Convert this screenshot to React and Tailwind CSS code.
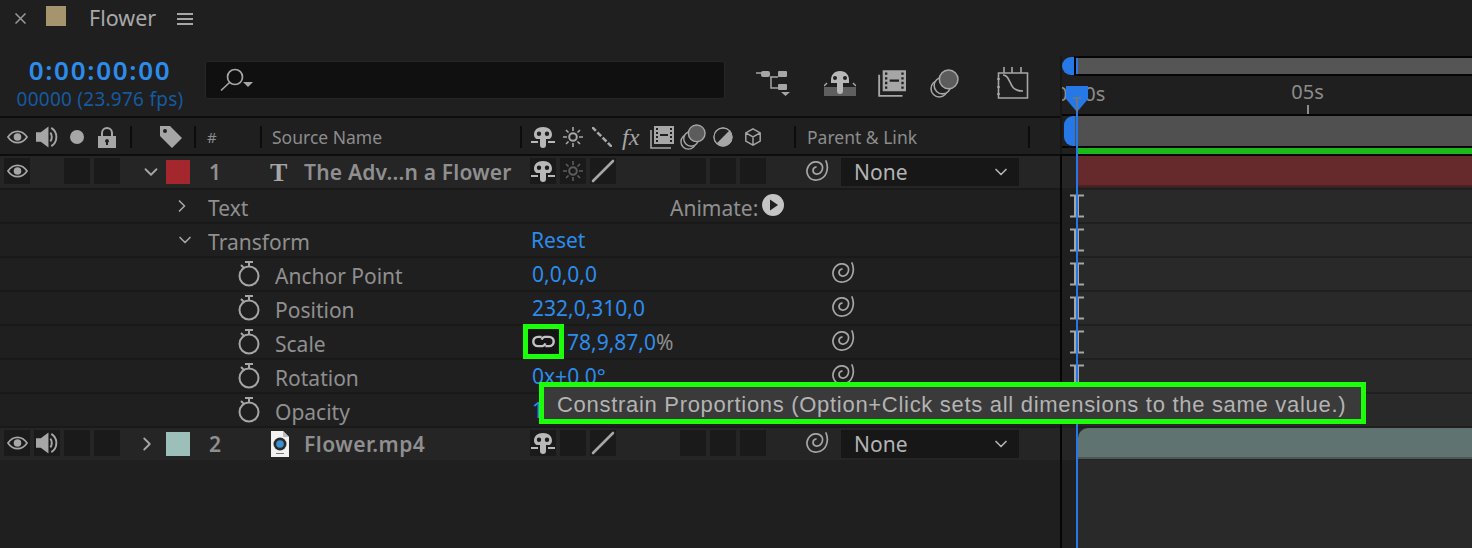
import React from "react";
import { ChevronDown, ChevronRight } from "lucide-react";

const GREY = "#a6a6a6";

function Eye({ className }) {
  return (
    <svg viewBox="0 0 22 14" className={className}>
      <path d="M1 7C4 2.500 7.500 1 11 1s7 1.500 10 6c-3 4.500-6.500 6-10 6S4 11.500 1 7z" fill="none" stroke={GREY} strokeWidth="1.800" />
      <circle cx="11" cy="7" r="4" fill={GREY} />
    </svg>
  );
}

function Speaker({ className }) {
  return (
    <svg viewBox="0 0 24 22" className={className}>
      <path d="M0 6h5l8-6v22l-8-6H0z" fill={GREY} />
      <path d="M15 6.500c2 2.500 2 6.500 0 9" fill="none" stroke={GREY} strokeWidth="2" />
      <path d="M16 1.500c7 4.500 7 14.500 0 19" fill="none" stroke={GREY} strokeWidth="2" />
    </svg>
  );
}

function Lock({ className }) {
  return (
    <svg viewBox="0 0 18 21" className={className}>
      <path d="M4 9V6a5 5 0 0 1 10 0v3" fill="none" stroke={GREY} strokeWidth="2" />
      <path fillRule="evenodd" d="M0 9h18v12H0zM9 12a2 2 0 0 0-1 3.700V18h2v-2.300A2 2 0 0 0 9 12z" fill={GREY} />
    </svg>
  );
}

function Tag({ className }) {
  return (
    <svg viewBox="0 0 24 24" className={className}>
      <path fillRule="evenodd" d="M1 1h10l12 12-10 10L1 11zM6 4a2 2 0 1 0 0 4 2 2 0 0 0 0-4z" fill={GREY} />
    </svg>
  );
}

function Shy({ className }) {
  return (
    <svg viewBox="0 0 24 22" className={className}>
      <path fillRule="evenodd" d="M12 1c5.500 0 9 3 9 7.500 0 2-1 3.500-2.500 4.500H15v6a3 3 0 0 1-6 0v-6H5.500C4 12 3 10.500 3 8.500 3 4 6.500 1 12 1zM8 5.500a2.200 2.200 0 1 0 0 4.400 2.200 2.200 0 0 0 0-4.400zM16 5.500a2.200 2.200 0 1 0 0 4.400 2.200 2.200 0 0 0 0-4.400z" fill="#b8b8b8" />
      <path d="M0 16h7M17 16h7" stroke="#b8b8b8" strokeWidth="1.800" />
    </svg>
  );
}

function ShyBig({ className }) {
  return (
    <svg viewBox="0 0 32 26" className={className}>
      <path d="M0 17h32v9H0z" fill="#5f5f5f" />
      <path d="M0 16l3-3M29 13l3 3" stroke="#a6a6a6" strokeWidth="1.500" />
      <path fillRule="evenodd" d="M16 1c6 0 9 4 9 9v3h-6v8a3 3 0 0 1-6 0v-8H7v-3c0-5 3-9 9-9zM11 6a2 2 0 1 0 0 4 2 2 0 0 0 0-4zM21 6a2 2 0 1 0 0 4 2 2 0 0 0 0-4z" fill="#b8b8b8" />
    </svg>
  );
}

function Sun({ className, color = GREY }) {
  return (
    <svg viewBox="0 0 20 20" className={className} stroke={color} strokeWidth="1.600" fill="none">
      <circle cx="10" cy="10" r="3.800" strokeWidth="2" />
      <path d="M10 0v4M10 16v4M0 10h4M16 10h4M3 3l2.500 2.500M14.500 14.500L17 17M17 3l-2.500 2.500M5.500 14.500L3 17" />
    </svg>
  );
}

function Dashes({ className }) {
  return (
    <svg viewBox="0 0 20 20" className={className}>
      <path d="M0 0l20 20" stroke={GREY} strokeWidth="2.600" strokeDasharray="5.500 2" />
    </svg>
  );
}

function Slash({ className }) {
  return (
    <svg viewBox="0 0 24 24" className={className}>
      <path d="M2 22L22 2" stroke={GREY} strokeWidth="2.600" strokeLinecap="round" />
    </svg>
  );
}

function Film({ className }) {
  return (
    <svg viewBox="0 0 24 24" className={className}>
      <path d="M1 5v18h20" fill="none" stroke={GREY} strokeWidth="1.600" />
      <path fillRule="evenodd" d="M4 1h20v18H4zM6 3v2h2V3zM6 7v2h2V7zM6 11v2h2v-2zM6 15v2h2v-2zM20 3v2h2V3zM20 7v2h2V7zM20 11v2h2v-2zM20 15v2h2v-2zM10 9v2h8V9z" fill={GREY} />
    </svg>
  );
}

function Circles({ className }) {
  return (
    <svg viewBox="0 0 28 28" className={className} fill="none" stroke={GREY} strokeWidth="1.500">
      <circle cx="9" cy="19" r="8" />
      <circle cx="12" cy="16" r="8" fill="#1f1f1f" />
      <circle cx="18" cy="10" r="9" fill="#5c5c5c" />
    </svg>
  );
}

function HalfCircle({ className }) {
  return (
    <svg viewBox="0 0 20 20" className={className}>
      <circle cx="10" cy="10" r="9.500" fill={GREY} />
      <path d="M16.700 3.300A9.500 9.500 0 0 0 3.300 16.700z" fill="#1f1f1f" />
      <circle cx="10" cy="10" r="9" fill="none" stroke={GREY} strokeWidth="1.300" />
    </svg>
  );
}

function Cube({ className }) {
  return (
    <svg viewBox="0 0 20 20" className={className} fill="none" stroke={GREY} strokeWidth="1.600">
      <path d="M10 1l8 4.500v9L10 19l-8-4.500v-9zM2 5.500l8 4.500 8-4.500M10 10v9" />
    </svg>
  );
}

function Spiral({ className }) {
  return (
    <svg viewBox="0 0 24 24" className={className} fill="none" stroke={GREY} strokeWidth="1.700" strokeLinecap="round">
      <path d="M21 2C24 9 22 20 12 21 4 22 0 14 3 8 6 2 14 1 17 6 19 11 15 16 11 15 7 14 7 9 11 8" />
    </svg>
  );
}

function Stopwatch({ className }) {
  return (
    <svg viewBox="0 0 22 26" className={className} fill="none" stroke={GREY} strokeWidth="2">
      <circle cx="11" cy="15" r="9.500" />
      <path d="M7 1h8M11 1v4M3 4l3 3" />
    </svg>
  );
}

function Link({ className }) {
  return (
    <svg viewBox="0 0 26 14" className={className} fill="none" stroke="#c2c2c2" strokeWidth="2.600">
      <path d="M11 2H7a5 5 0 0 0 0 10h5a4 4 0 0 0 3-3" />
      <path d="M15 12h4a5 5 0 0 0 0-10h-5a4 4 0 0 0-3 3" />
    </svg>
  );
}

function FileIcon({ className }) {
  return (
    <svg viewBox="0 0 20 26" className={className}>
      <path d="M1 0h12l6 6v20H1z" fill="#f2f2f2" />
      <path d="M13 0v6h6" fill="#bdbdbd" />
      <circle cx="10" cy="13" r="6.500" fill="#2a2a2a" />
      <circle cx="10" cy="13" r="3.800" fill="#3c8fd0" />
      <path d="M6 22.500h8" stroke="#777" strokeWidth="1" />
    </svg>
  );
}

function Search({ className }) {
  return (
    <svg viewBox="0 0 34 24" className={className} fill="none">
      <circle cx="15" cy="9" r="7.500" stroke={GREY} strokeWidth="1.700" />
      <path d="M9.500 14.500L1 22.500" stroke={GREY} strokeWidth="1.700" />
      <path d="M23 14h10l-5 5z" fill={GREY} />
    </svg>
  );
}

function FlowIcon({ className }) {
  return (
    <svg viewBox="0 0 34 26" className={className}>
      <path d="M0 3h6M14 7h8M15 7v11h8" stroke={GREY} strokeWidth="1.500" fill="none" />
      <rect x="5" y="1" width="9" height="6" rx="2" fill={GREY} />
      <rect x="22" y="1" width="9" height="6" rx="1" fill={GREY} />
      <rect x="22" y="14" width="9" height="6" rx="1" fill={GREY} />
      <path d="M25 22h9l-4.500 4z" fill={GREY} />
    </svg>
  );
}

function GraphIcon({ className }) {
  return (
    <svg viewBox="0 0 32 32" className={className} fill="none" stroke={GREY} strokeWidth="1.600">
      <path d="M1.500 6h29v25h-29z" />
      <path d="M7 0v6M15 0v6M24 0v6M0 12h3M0 20h3M0 27h3" />
      <path d="M6 8c5 0 6 6 9 11 2 4 5 5 11 5" />
    </svg>
  );
}

function Divider() {
  return <div className="w-[2px] h-[22px] bg-[#0c0c0c] shrink-0" />;
}

function Slot({ children, className = "" }) {
  return <div className={`w-[26px] h-[26px] -mt-[2px] bg-[#1a1a1a] flex items-center justify-center shrink-0 ${className}`}>{children}</div>;
}

function NoneSelect() {
  return (
    <div className="w-[178px] h-[28px] bg-[#171717] flex items-center justify-between pl-[13px] pr-[8px] ml-[12px] text-[21px] text-[#b3b3b3]">
      <span className="mt-[2px]">None</span>
      <ChevronDown size={20} color="#b3b3b3" strokeWidth={2} />
    </div>
  );
}

function Prop({ name, children, spiral = true }) {
  return (
    <div className="h-[32px] box-content border-b-2 border-[#191919] flex items-center">
      <div className="w-[238px] shrink-0" />
      <Stopwatch className="w-[22px] h-[26px] shrink-0" />
      <div className="w-[257px] ml-[15px] mt-[6px] text-[21px] text-[#8f8f8f] shrink-0">{name}</div>
      <div className="w-[299px] mt-[2px] shrink-0 text-[21px] text-[#2d8ceb]">{children}</div>
      {spiral && <Spiral className="w-[24px] h-[24px] -mt-[2px]" />}
    </div>
  );
}

function LaneRow({ keyframe }) {
  return (
    <div className="h-[32px] box-content border-b-2 border-[#1f1f1f] bg-[linear-gradient(to_right,#1f1f1f_15px,#292929_15px)] pl-[8px] flex items-center">
      {keyframe && (
        <svg viewBox="0 0 14 24" className="w-[14px] h-[24px]">
          <path d="M0 1.500h14M0 22.500h14" stroke="#a6a6a6" strokeWidth="2" fill="none" />
          <path d="M4 1.500h5v21H4z" fill="#a6a6a6" />
        </svg>
      )}
    </div>
  );
}

export default function App() {
  return (
    <div className="relative w-[1472px] h-[548px] overflow-hidden flex bg-[#1f1f1f] font-['Noto_Sans',sans-serif]">
      <div className="w-[1060px] shrink-0 flex flex-col">
        {/* tab */}
        <div className="h-[52px] flex items-start pt-[6px]">
          <div className="ml-[15px] mt-[7px] w-[11px] h-[11px]">
            <svg viewBox="0 0 11 11" className="w-[11px] h-[11px]"><path d="M.5.500l10 10M10.500.500l-10 10" stroke="#9a9a9a" strokeWidth="1.500" /></svg>
          </div>
          <div className="ml-[20px] w-[20px] h-[20px] bg-[#a6946f]" />
          <div className="ml-[23px] -mt-[3px] text-[21.500px] leading-[30px] text-[#a8a8a8]">Flower</div>
          <div className="ml-[21px] mt-[7px] w-[16px] h-[12px] border-y-2 border-[#a6a6a6] flex items-center"><div className="w-full h-[2px] bg-[#a6a6a6]" /></div>
        </div>
        {/* time and toolbar */}
        <div className="h-[64px] box-content flex items-start border-b-2 border-[#0d0d0d]">
          <div className="w-[205px] shrink-0 pl-[17px] pr-[22px] flex flex-col items-center">
            <div className="text-[26px] leading-[36px] font-semibold text-[#2d8ceb] tracking-[1.700px] whitespace-nowrap">0:00:00:00</div>
            <div className="text-[19px] leading-[26px] -mt-[2px] text-[#155a9f] tracking-[0.250px] whitespace-nowrap">00000 (23.976 fps)</div>
          </div>
          <div className="mt-[9px] w-[520px] h-[38px] rounded-[3px] bg-[#101010] border border-[#262626] flex items-center pl-[14px]">
            <Search className="w-[34px] h-[24px]" />
          </div>
          <div className="flex items-center mt-[15px]">
            <FlowIcon className="w-[34px] h-[26px] ml-[31px]" />
            <ShyBig className="w-[32px] h-[26px] ml-[34px]" />
            <Film className="w-[28px] h-[28px] ml-[22px]" />
            <Circles className="w-[29px] h-[29px] ml-[24px]" />
            <GraphIcon className="w-[32px] h-[32px] ml-[38px]" />
          </div>
        </div>
        {/* column headers */}
        <div className="h-[34px] pt-[2px] box-content flex items-center text-[17.500px] text-[#8c8c8c] border-b-2 border-[#0d0d0d]">
          <Eye className="w-[21px] h-[14px] ml-[7px] shrink-0" />
          <Speaker className="w-[23px] h-[22px] ml-[8px] shrink-0" />
          <div className="w-[14px] h-[14px] ml-[11px] rounded-full bg-[#a6a6a6] shrink-0" />
          <Lock className="w-[18px] h-[21px] ml-[14px] shrink-0" />
          <div className="ml-[14px]"><Divider /></div>
          <Tag className="w-[24px] h-[24px] ml-[27px] shrink-0" />
          <div className="ml-[11px]"><Divider /></div>
          <div className="w-[9px] ml-[11px] text-[15px]">#</div>
          <div className="ml-[44px]"><Divider /></div>
          <div className="w-[248px] ml-[10px] shrink-0 whitespace-nowrap">Source Name</div>
          <Divider />
          <Shy className="w-[24px] h-[22px] ml-[9px] shrink-0" />
          <Sun className="w-[20px] h-[20px] ml-[8px] shrink-0" />
          <Dashes className="w-[20px] h-[20px] ml-[9px] shrink-0" />
          <span className="ml-[10px] w-[21px] text-[24px] leading-none italic font-['Liberation_Serif',serif] text-[#a6a6a6]">fx</span>
          <Film className="w-[24px] h-[24px] ml-[7px] shrink-0" />
          <Circles className="w-[26px] h-[26px] ml-[6px] shrink-0" />
          <HalfCircle className="w-[20px] h-[20px] ml-[7px] shrink-0" />
          <Cube className="w-[18px] h-[18px] ml-[11px] shrink-0" />
          <div className="ml-[32px]"><Divider /></div>
          <div className="w-[221px] ml-[11px] shrink-0 whitespace-nowrap">Parent &amp; Link</div>
          <Divider />
        </div>
        {/* layer 1 */}
        <div className="h-[32px] box-content border-b-2 border-[#191919] bg-[#252525] flex items-center">
          <Slot className="ml-[4px]"><Eye className="w-[21px] h-[14px]" /></Slot>
          <Slot className="ml-[34px]" />
          <Slot className="ml-[4px]" />
          <ChevronDown size={22} color={GREY} className="ml-[20px] shrink-0" />
          <div className="w-[24px] h-[24px] ml-[4px] bg-[#a4272d] shrink-0" />
          <div className="w-[61px] ml-[19px] mt-[2px] text-[21px] font-semibold text-[#8f8f8f] shrink-0">1</div>
          <div className="w-[34px] mt-[2px] shrink-0 text-[26px] leading-none font-['Liberation_Serif',serif] font-bold text-[#a6a6a6]">T</div>
          <div className="w-[226px] mt-[2px] text-[21px] font-semibold tracking-[0.200px] text-[#8f8f8f] whitespace-nowrap shrink-0">The Adv...n a Flower</div>
          <Slot><Shy className="w-[24px] h-[22px]" /></Slot>
          <Slot className="ml-[4px]"><Sun className="w-[20px] h-[20px]" color="#5c5c5c" /></Slot>
          <Slot className="ml-[4px]"><Slash className="w-[24px] h-[24px]" /></Slot>
          <Slot className="ml-[64px]" />
          <Slot className="ml-[4px]" />
          <Slot className="ml-[4px]" />
          <Spiral className="w-[24px] h-[24px] ml-[39px] -mt-[2px] shrink-0" />
          <NoneSelect />
        </div>
        <div className="h-[32px] box-content border-b-2 border-[#191919] flex items-center">
          <ChevronRight size={20} color={GREY} className="ml-[172px] shrink-0" />
          <div className="w-[462px] ml-[16px] mt-[6px] text-[21px] text-[#8f8f8f] shrink-0">Text</div>
          <div className="text-[21px] mt-[6px] text-[#8f8f8f] w-[92px] shrink-0">Animate:</div>
          <svg viewBox="0 0 22 22" className="w-[22px] h-[22px] -mt-[2px] shrink-0">
            <circle cx="11" cy="11" r="11" fill="#c4c4c4" />
            <path d="M8 5.500l8 5.500-8 5.500z" fill="#1f1f1f" />
          </svg>
        </div>
        <div className="h-[32px] box-content border-b-2 border-[#191919] flex items-center">
          <ChevronDown size={20} color={GREY} className="ml-[175px] shrink-0" />
          <div className="w-[323px] ml-[13px] mt-[6px] text-[21px] text-[#8f8f8f] shrink-0">Transform</div>
          <div className="text-[21px] text-[#2d8ceb] mt-[1px]">Reset</div>
        </div>
        <Prop name="Anchor Point">0,0,0,0</Prop>
        <Prop name="Position">232,0,310,0</Prop>
        <Prop name="Scale">
          <div className="flex items-center -ml-[9px]">
            <div className="w-[41px] h-[35px] -mt-[7px] -mb-[4px] border-[5px] border-[#1cff0a] bg-[#141414] flex items-center justify-center shrink-0">
              <Link className="w-[25px] h-[13px]" />
            </div>
            <span className="ml-[3px]">78,9,87,0<span className="text-[#8f8f8f]">%</span></span>
          </div>
        </Prop>
        <Prop name="Rotation">0x+0,0°</Prop>
        <Prop name="Opacity" spiral={false}>100%</Prop>
        {/* layer 2 */}
        <div className="h-[32px] bg-[#252525] flex items-center">
          <Slot className="ml-[4px]"><Eye className="w-[21px] h-[14px]" /></Slot>
          <Slot className="ml-[4px]"><Speaker className="w-[23px] h-[22px]" /></Slot>
          <Slot className="ml-[4px]" />
          <Slot className="ml-[4px]" />
          <ChevronRight size={22} color={GREY} className="ml-[16px] shrink-0" />
          <div className="w-[24px] h-[24px] ml-[8px] bg-[#9cbfba] shrink-0" />
          <div className="w-[61px] ml-[19px] mt-[2px] text-[21px] font-semibold text-[#8f8f8f] shrink-0">2</div>
          <div className="w-[34px] shrink-0 flex"><FileIcon className="w-[20px] h-[26px]" /></div>
          <div className="w-[226px] mt-[2px] text-[21px] font-semibold tracking-[0.500px] text-[#8f8f8f] whitespace-nowrap shrink-0">Flower.mp4</div>
          <Slot><Shy className="w-[24px] h-[22px]" /></Slot>
          <Slot className="ml-[4px]" />
          <Slot className="ml-[4px]"><Slash className="w-[24px] h-[24px]" /></Slot>
          <Slot className="ml-[64px]" />
          <Slot className="ml-[4px]" />
          <Slot className="ml-[4px]" />
          <Spiral className="w-[24px] h-[24px] ml-[39px] -mt-[2px] shrink-0" />
          <NoneSelect />
        </div>
      </div>

      {/* divider between panels */}
      <div className="w-[2px] shrink-0 flex flex-col">
        <div className="h-[56px]" />
        <div className="h-[98px] bg-[#171717]" />
        <div className="flex-1 bg-[#050505]" />
      </div>

      {/* timeline */}
      <div className="flex-1 flex flex-col min-w-0">
        <div className="h-[56px]" />
        <div className="h-[20px] flex">
          <div className="w-[12px] h-[18px] mt-[1px] rounded-l-full bg-[#2678e6]" />
          <div className="flex-1 bg-[#555555] border-y-2 border-l-2 border-[#050505]" />
        </div>
        <div className="h-[38px] flex items-start text-[20px] text-[#8c8c8c] overflow-hidden">
          <span className="-ml-[6px] mt-[3px] whitespace-nowrap">0:00s</span>
          <div className="ml-[186px] mt-[3px] flex flex-col items-center">
            <span className="leading-[26px]">05s</span>
            <div className="w-[2px] h-[10px] bg-[#8c8c8c]" />
          </div>
        </div>
        <div className="h-[30px] box-content flex border-y-2 border-[#050505]">
          <div className="w-[11px] ml-[2px] rounded-l-[9px] bg-[#2678e6]" />
          <div className="flex-1 bg-[#505050]" />
        </div>
        <div className="h-[6px] ml-[15px] bg-[#1cb81c]" />
        <div className="h-[2px] bg-[#050505]" />
        <div className="h-[32px] box-content border-b-2 border-[#1f1f1f] pl-[15px] bg-[#252525]"><div className="h-[31px] bg-[#662a2d] border-b-2 border-[#4f2022]" /></div>
        <LaneRow keyframe />
        <LaneRow keyframe />
        <LaneRow keyframe />
        <LaneRow keyframe />
        <LaneRow keyframe />
        <LaneRow keyframe />
        <LaneRow />
        <div className="h-[32px] pl-[16px] bg-[#252525]"><div className="h-[31px] rounded-tl-[10px] bg-[#5f7370] border-b-2 border-[#4a5957]" /></div>
        <div className="flex-1 bg-[linear-gradient(to_right,#1f1f1f_15px,#292929_15px)]" />
      </div>

      {/* playhead */}
      <div className="absolute left-[1076px] top-[58px] w-[2px] h-[16px] bg-[#2678e6]" />
      <div className="absolute left-[1076px] top-[86px] bottom-0 w-[2px] bg-[#2678e6]" />
      <svg viewBox="0 0 24 28" className="absolute left-[1065px] top-[85px] w-[24px] h-[28px]">
        <path d="M1 1h22v13L12 27 1 14z" fill="#2678e6" />
        <path d="M8 13h8M12 13v14" stroke="#777" strokeWidth="1.500" />
      </svg>

      {/* tooltip */}
      <div className="absolute left-[539px] top-[382px] w-[827px] h-[42px] border-[5px] border-[#1cff0a] bg-[#3a3a3a] flex items-center pl-[13px] pt-[2px] text-[22px] tracking-[0.700px] text-[#b3b3b3] font-['Liberation_Sans',sans-serif] whitespace-nowrap">
        Constrain Proportions (Option+Click sets all dimensions to the same value.)
      </div>
    </div>
  );
}
